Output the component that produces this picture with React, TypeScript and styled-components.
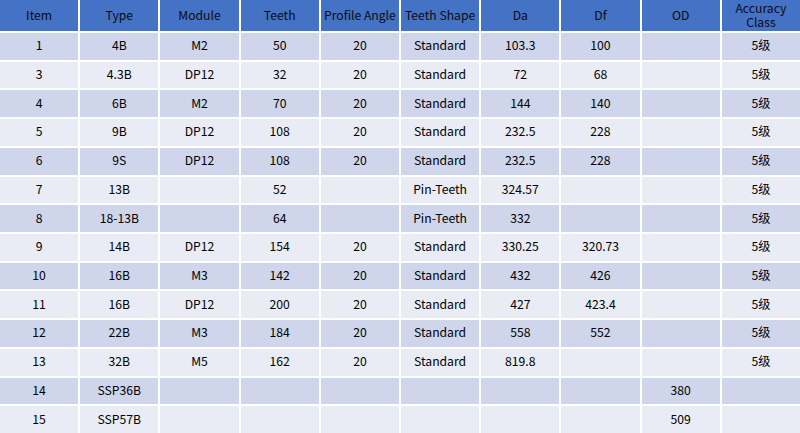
import React from "react";
import styled, { createGlobalStyle } from "styled-components";

const Global = createGlobalStyle`
  html, body { margin: 0; padding: 0; background: #ffffff; }
  body { font-family: "Noto Sans CJK SC", "Noto Sans", sans-serif; }
`;

const Table = styled.div`
  width: 800px;
  height: 433px;
  display: grid;
  grid-template-columns: repeat(10, 1fr);
  grid-template-rows: 31px repeat(14, 1fr);
  gap: 2px;
  background: #ffffff;
  overflow: hidden;
`;

const HeadCell = styled.div`
  background: #4472c4;
  color: #0c0c14;
  font-size: 12.2px;
  line-height: 14px;
  padding-bottom: 1px;
  display: flex;
  align-items: center;
  justify-content: center;
  text-align: center;
  white-space: pre-line;
`;

const Cell = styled.div<{ $odd: boolean }>`
  background: ${(p) => (p.$odd ? "#cfd5ea" : "#e9ebf5")};
  color: #000000;
  font-size: 12.2px;
  padding-bottom: 2px;
  display: flex;
  align-items: center;
  justify-content: center;
  text-align: center;
`;

const headers = [
  "Item",
  "Type",
  "Module",
  "Teeth",
  "Profile Angle",
  "Teeth Shape",
  "Da",
  "Df",
  "OD",
  "Accuracy\nClass",
];

const rows: string[][] = [
  ["1", "4B", "M2", "50", "20", "Standard", "103.3", "100", "", "5级"],
  ["3", "4.3B", "DP12", "32", "20", "Standard", "72", "68", "", "5级"],
  ["4", "6B", "M2", "70", "20", "Standard", "144", "140", "", "5级"],
  ["5", "9B", "DP12", "108", "20", "Standard", "232.5", "228", "", "5级"],
  ["6", "9S", "DP12", "108", "20", "Standard", "232.5", "228", "", "5级"],
  ["7", "13B", "", "52", "", "Pin-Teeth", "324.57", "", "", "5级"],
  ["8", "18-13B", "", "64", "", "Pin-Teeth", "332", "", "", "5级"],
  ["9", "14B", "DP12", "154", "20", "Standard", "330.25", "320.73", "", "5级"],
  ["10", "16B", "M3", "142", "20", "Standard", "432", "426", "", "5级"],
  ["11", "16B", "DP12", "200", "20", "Standard", "427", "423.4", "", "5级"],
  ["12", "22B", "M3", "184", "20", "Standard", "558", "552", "", "5级"],
  ["13", "32B", "M5", "162", "20", "Standard", "819.8", "", "", "5级"],
  ["14", "SSP36B", "", "", "", "", "", "", "380", ""],
  ["15", "SSP57B", "", "", "", "", "", "", "509", ""],
];

export default function App() {
  return (
    <>
      <Global />
      <Table>
        {headers.map((h) => (
          <HeadCell key={h}>{h}</HeadCell>
        ))}
        {rows.map((r, i) =>
          r.map((c, j) => (
            <Cell key={`${i}-${j}`} $odd={i % 2 === 0}>
              {c}
            </Cell>
          ))
        )}
      </Table>
    </>
  );
}
